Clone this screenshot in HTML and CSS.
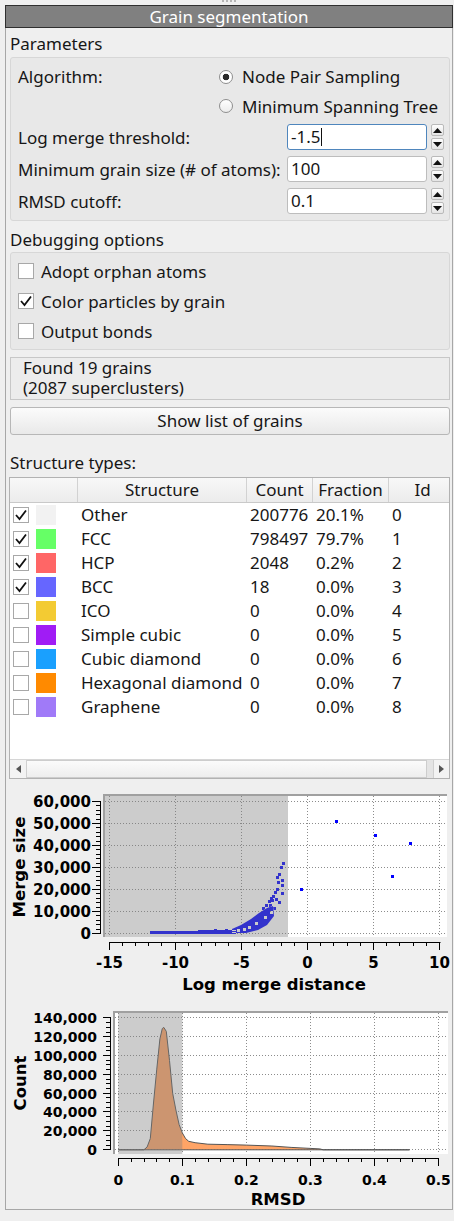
FILE: index.html
```html
<!DOCTYPE html>
<html>
<head>
<meta charset="utf-8">
<title>Grain segmentation</title>
<link rel="stylesheet" href="styles.css">
</head>
<body>
<div class="grip"><span></span></div>
<div class="panel">
  <div class="titlebar">Grain segmentation</div>
  <div class="content">
    <div class="sec sec-params">Parameters</div>
    <div class="group params">
      <div class="lbl g-r1">Algorithm:</div>
      <div class="radio g-r1b"><span class="rb on"></span>Node Pair Sampling</div>
      <div class="radio g-r2b"><span class="rb"></span>Minimum Spanning Tree</div>
      <div class="lbl wide g-r3">Log merge threshold:</div>
      <div class="field g-r3f">
        <div class="input focus">-1.5<span class="caret"></span></div>
        <div class="spin">
          <span class="sbtn"><svg width="9" height="5" viewBox="0 0 9 5"><path d="M0 5L4.5 0L9 5Z"/></svg></span>
          <span class="sbtn"><svg width="9" height="5" viewBox="0 0 9 5"><path d="M0 0L4.5 5L9 0Z"/></svg></span>
        </div>
      </div>
      <div class="lbl wide g-r4">Minimum grain size (# of atoms):</div>
      <div class="field g-r4f">
        <div class="input">100</div>
        <div class="spin">
          <span class="sbtn"><svg width="9" height="5" viewBox="0 0 9 5"><path d="M0 5L4.5 0L9 5Z"/></svg></span>
          <span class="sbtn"><svg width="9" height="5" viewBox="0 0 9 5"><path d="M0 0L4.5 5L9 0Z"/></svg></span>
        </div>
      </div>
      <div class="lbl wide g-r5">RMSD cutoff:</div>
      <div class="field g-r5f">
        <div class="input">0.1</div>
        <div class="spin">
          <span class="sbtn"><svg width="9" height="5" viewBox="0 0 9 5"><path d="M0 5L4.5 0L9 5Z"/></svg></span>
          <span class="sbtn"><svg width="9" height="5" viewBox="0 0 9 5"><path d="M0 0L4.5 5L9 0Z"/></svg></span>
        </div>
      </div>
    </div>

    <div class="sec sec-debug">Debugging options</div>
    <div class="group debug">
      <div class="crow"><span class="cb"></span>Adopt orphan atoms</div>
      <div class="crow"><span class="cb"><svg width="14" height="14" viewBox="0 0 14 14"><path d="M2 7L5.5 11L12 2.5" fill="none" stroke="#111" stroke-width="1.8"/></svg></span>Color particles by grain</div>
      <div class="crow"><span class="cb"></span>Output bonds</div>
    </div>

    <div class="status">Found 19 grains<br>(2087 superclusters)</div>
    <div class="btn">Show list of grains</div>

    <div class="sec sec-struct">Structure types:</div>
    <div class="table">
      <div class="thead">
        <div class="th"></div>
        <div class="th">Structure</div>
        <div class="th">Count</div>
        <div class="th">Fraction</div>
        <div class="th">Id</div>
      </div>
      <div class="tbody">
        <div class="tr">
          <div class="td c0"><span class="cb"><svg width="14" height="14" viewBox="0 0 14 14"><path d="M2 7L5.5 11L12 2.5" fill="none" stroke="#111" stroke-width="1.8"/></svg></span><span class="sw sw-other"></span></div>
          <div class="td">Other</div><div class="td">200776</div><div class="td">20.1%</div><div class="td">0</div>
        </div>
        <div class="tr">
          <div class="td c0"><span class="cb"><svg width="14" height="14" viewBox="0 0 14 14"><path d="M2 7L5.5 11L12 2.5" fill="none" stroke="#111" stroke-width="1.8"/></svg></span><span class="sw sw-fcc"></span></div>
          <div class="td">FCC</div><div class="td">798497</div><div class="td">79.7%</div><div class="td">1</div>
        </div>
        <div class="tr">
          <div class="td c0"><span class="cb"><svg width="14" height="14" viewBox="0 0 14 14"><path d="M2 7L5.5 11L12 2.5" fill="none" stroke="#111" stroke-width="1.8"/></svg></span><span class="sw sw-hcp"></span></div>
          <div class="td">HCP</div><div class="td">2048</div><div class="td">0.2%</div><div class="td">2</div>
        </div>
        <div class="tr">
          <div class="td c0"><span class="cb"><svg width="14" height="14" viewBox="0 0 14 14"><path d="M2 7L5.5 11L12 2.5" fill="none" stroke="#111" stroke-width="1.8"/></svg></span><span class="sw sw-bcc"></span></div>
          <div class="td">BCC</div><div class="td">18</div><div class="td">0.0%</div><div class="td">3</div>
        </div>
        <div class="tr">
          <div class="td c0"><span class="cb"></span><span class="sw sw-ico"></span></div>
          <div class="td">ICO</div><div class="td">0</div><div class="td">0.0%</div><div class="td">4</div>
        </div>
        <div class="tr">
          <div class="td c0"><span class="cb"></span><span class="sw sw-sc"></span></div>
          <div class="td">Simple cubic</div><div class="td">0</div><div class="td">0.0%</div><div class="td">5</div>
        </div>
        <div class="tr">
          <div class="td c0"><span class="cb"></span><span class="sw sw-cd"></span></div>
          <div class="td">Cubic diamond</div><div class="td">0</div><div class="td">0.0%</div><div class="td">6</div>
        </div>
        <div class="tr">
          <div class="td c0"><span class="cb"></span><span class="sw sw-hd"></span></div>
          <div class="td">Hexagonal diamond</div><div class="td">0</div><div class="td">0.0%</div><div class="td">7</div>
        </div>
        <div class="tr">
          <div class="td c0"><span class="cb"></span><span class="sw sw-gr"></span></div>
          <div class="td">Graphene</div><div class="td">0</div><div class="td">0.0%</div><div class="td">8</div>
        </div>
      </div>
      <div class="hscroll">
        <div class="sb-btn sb-left"><svg width="5" height="8" viewBox="0 0 5 8"><path d="M5 0L0 4L5 8Z"/></svg></div>
        <div class="sb-handle"></div>
        <div class="sb-gap"></div>
        <div class="sb-btn sb-right"><svg width="5" height="8" viewBox="0 0 5 8"><path d="M0 0L5 4L0 8Z"/></svg></div>
      </div>
    </div>

    <svg class="chart chart1" width="440" height="216" viewBox="10 784 440 216">
      <rect x="103" y="794" width="344" height="143" fill="#fff"/>
      <path class="grid" d="M109.5 796V937M175.5 796V937M241.5 796V937M307.5 796V937M373.5 796V937M439.5 796V937M105 801.5H447M105 823.5H447M105 845.5H447M105 867.5H447M105 889.5H447M105 911.5H447M105 933.5H447"/>
      <path fill="#0000ff" d="M150 931h86v3h-86zM198 930h38v2h-38zM232 933L246 933L258 930L267 925L274 916L273 906L267 908L259 913L251 919L241 925L232 929Z
        M262 907h3v3h-3zM265 904h3v3h-3zM268 900h3v3h-3zM270 897h3v3h-3zM271 899h3v3h-3zM269 904h3v3h-3zM273 907h3v3h-3zM272 895h3v3h-3zM274 891h3v3h-3zM276 888h3v3h-3zM276 876h3v3h-3zM278 873h3v3h-3zM280 866h3v3h-3zM282 862h3v3h-3zM281 879h3v3h-3zM277 881h3v3h-3zM281 884h3v3h-3zM281 892h3v3h-3zM278 901h3v3h-3zM275 898h3v3h-3zM270 911h3v3h-3zM264 916h3v3h-3zM255 922h3v3h-3zM248 926h3v3h-3zM243 928h3v3h-3zM237 929h3v3h-3zM225 929h3v3h-3zM214 929h3v3h-3z
        M300 888h3v3h-3zM335 820h3v3h-3zM374 834h3v3h-3zM391 875h3v3h-3zM409 842h3v3h-3z"/>
      <rect x="105" y="796" width="183" height="141" fill="#808080" fill-opacity="0.4"/>
      <rect x="103" y="794" width="344" height="2" fill="#a0a0a0"/>
      <rect x="103" y="794" width="2" height="143" fill="#a0a0a0"/>
      <path class="axis" d="M100.5 801V934M92 801.5H100M92 823.5H100M92 845.5H100M92 867.5H100M92 889.5H100M92 911.5H100M92 933.5H100
        M96 929.5H100M96 924.5H100M96 920.5H100M96 915.5H100M96 907.5H100M96 902.5H100M96 898.5H100M96 893.5H100M96 885.5H100M96 880.5H100M96 876.5H100M96 871.5H100M96 863.5H100M96 858.5H100M96 854.5H100M96 849.5H100M96 841.5H100M96 836.5H100M96 832.5H100M96 827.5H100M96 819.5H100M96 814.5H100M96 810.5H100M96 805.5H100
        M109 942.5H440.5M109.5 942V950M175.5 942V950M241.5 942V950M307.5 942V950M373.5 942V950M439.5 942V950
        M122.5 942V946M135.5 942V946M148.5 942V946M161.5 942V946M188.5 942V946M201.5 942V946M215.5 942V946M228.5 942V946M254.5 942V946M267.5 942V946M281.5 942V946M294.5 942V946M320.5 942V946M333.5 942V946M347.5 942V946M360.5 942V946M386.5 942V946M399.5 942V946M413.5 942V946M426.5 942V946"/>
      <g class="tk1">
        <text x="91" y="938.8">0</text>
        <text x="91" y="916.9">10,000</text>
        <text x="91" y="894.9">20,000</text>
        <text x="91" y="873">30,000</text>
        <text x="91" y="851.1">40,000</text>
        <text x="91" y="829.2">50,000</text>
        <text x="91" y="807.2">60,000</text>
      </g>
      <g class="tkx1">
        <text x="109.5" y="968">-15</text>
        <text x="175.5" y="968">-10</text>
        <text x="241.5" y="968">-5</text>
        <text x="307.5" y="968">0</text>
        <text x="373.5" y="968">5</text>
        <text x="439.5" y="968">10</text>
      </g>
      <text class="atitle" x="274" y="990">Log merge distance</text>
      <text class="atitle" transform="translate(25 867) rotate(-90)">Merge size</text>
    </svg>

    <svg class="chart chart2" width="440" height="209" viewBox="10 1000 440 209">
      <rect x="113" y="1011" width="335" height="143" fill="#fff"/>
      <path class="grid" d="M118.5 1013V1154M182.5 1013V1154M246.5 1013V1154M310.5 1013V1154M374.5 1013V1154M438.5 1013V1154M115 1017.5H448M115 1036.5H448M115 1055.5H448M115 1074.5H448M115 1093.5H448M115 1111.5H448M115 1130.5H448M115 1149.5H448"/>
      <path fill="#ffa466" stroke="#555" stroke-width="1" stroke-linejoin="round" d="M118.3 1149.8L143.9 1149.8L147.1 1147L150.3 1138.5L153.5 1103L156.7 1069.9L159.9 1038.9L162.3 1028.5L163.8 1027.4L166.3 1031.4L169.5 1060.5L172.7 1093.4L175.9 1110L179.1 1124.5L182.3 1132.9L185.5 1138.5L188.7 1141.3L195.1 1142.7L207.9 1144.2L227.1 1144.6L246.3 1145.1L271.9 1146L291.1 1147.4L310.3 1148.4L319.9 1148.9L323.1 1149.8L409.5 1149.8Z"/>
      <rect x="118.3" y="1013" width="64" height="141" fill="#808080" fill-opacity="0.4"/>
      <rect x="113" y="1011" width="335" height="2" fill="#a0a0a0"/>
      <rect x="113" y="1011" width="2" height="143" fill="#a0a0a0"/>
      <path class="axis" d="M110.5 1017V1150M103 1017.5H110M103 1036.5H110M103 1055.5H110M103 1074.5H110M103 1093.5H110M103 1111.5H110M103 1130.5H110M103 1149.5H110
        M106 1145.5H110M106 1140.5H110M106 1135.5H110M106 1126.5H110M106 1121.5H110M106 1116.5H110M106 1107.5H110M106 1102.5H110M106 1097.5H110M106 1088.5H110M106 1083.5H110M106 1079.5H110M106 1069.5H110M106 1064.5H110M106 1060.5H110M106 1050.5H110M106 1046.5H110M106 1041.5H110M106 1032.5H110M106 1027.5H110M106 1022.5H110
        M118 1158.5H439M118.5 1158V1166M182.5 1158V1166M246.5 1158V1166M310.5 1158V1166M374.5 1158V1166M438.5 1158V1166
        M131.5 1158V1162M144.5 1158V1162M156.5 1158V1162M169.5 1158V1162M195.5 1158V1162M208.5 1158V1162M220.5 1158V1162M233.5 1158V1162M259.5 1158V1162M272.5 1158V1162M284.5 1158V1162M297.5 1158V1162M323.5 1158V1162M336.5 1158V1162M348.5 1158V1162M361.5 1158V1162M387.5 1158V1162M400.5 1158V1162M412.5 1158V1162M425.5 1158V1162"/>
      <g class="tk2">
        <text x="97" y="1154.9">0</text>
        <text x="97" y="1136.1">20,000</text>
        <text x="97" y="1117.3">40,000</text>
        <text x="97" y="1098.5">60,000</text>
        <text x="97" y="1079.7">80,000</text>
        <text x="97" y="1060.9">100,000</text>
        <text x="97" y="1042.1">120,000</text>
        <text x="97" y="1023.3">140,000</text>
      </g>
      <g class="tkx2">
        <text x="118.3" y="1185">0</text>
        <text x="182.3" y="1185">0.1</text>
        <text x="246.3" y="1185">0.2</text>
        <text x="310.3" y="1185">0.3</text>
        <text x="374.3" y="1185">0.4</text>
        <text x="438.3" y="1185">0.5</text>
      </g>
      <text class="atitle" x="278" y="1205">RMSD</text>
      <text class="atitle" transform="translate(26 1083) rotate(-90)">Count</text>
    </svg>
  </div>
</div>
</body>
</html>
```

FILE: styles.css
```css
html, body {
  margin: 0;
  padding: 0;
}
body {
  background: #efefef;
  font-family: "Noto Sans", "Open Sans", sans-serif;
  font-size: 17px;
  color: #161616;
  width: 454px;
  height: 1221px;
  overflow: hidden;
}

.grip {
  height: 5px;
  display: flex;
  justify-content: center;
}
.grip span {
  width: 14px;
  height: 0;
  margin-left: 4px;
  border-top: 2px dotted #b5b5b5;
}

.panel {
  margin-left: 5px;
  width: 448px;
  box-sizing: border-box;
  border: 1px solid #a7a7a7;
  border-top: none;
}

.titlebar {
  margin: 0 -1px;
  height: 23px;
  box-sizing: border-box;
  background: #808080;
  border: 1px solid #2f2f2f;
  color: #fff;
  text-align: center;
  line-height: 21px;
  font-size: 17px;
}

.content {
  padding: 0 2px 0 4px;
}

.sec {
  line-height: 20px;
}
.sec-params {
  padding-top: 6px;
  margin-bottom: 3px;
}
.sec-debug {
  padding-top: 9px;
  margin-bottom: 2px;
}
.sec-struct {
  padding-top: 18px;
  margin-bottom: 4px;
}

.group {
  background: #e8e8e8;
  border: 1px solid #d7d7d7;
  border-radius: 3px;
  box-sizing: border-box;
}

.params {
  height: 164px;
  padding: 7px 5px 6px 7px;
  display: grid;
  grid-template-columns: 201px 68px 1fr;
  grid-template-rows: 23px 24px 26px 26px 26px;
  row-gap: 6px;
}
.lbl {
  display: flex;
  align-items: center;
  white-space: nowrap;
}
.g-r1 { grid-column: 1; grid-row: 1; }
.g-r1b { grid-column: 2 / 4; grid-row: 1; }
.g-r2b { grid-column: 2 / 4; grid-row: 2; }
.g-r3 { grid-column: 1 / 3; grid-row: 3; }
.g-r3f { grid-column: 3; grid-row: 3; }
.g-r4 { grid-column: 1 / 3; grid-row: 4; }
.g-r4f { grid-column: 3; grid-row: 4; }
.g-r5 { grid-column: 1 / 3; grid-row: 5; }
.g-r5f { grid-column: 3; grid-row: 5; }

.radio {
  display: flex;
  align-items: center;
  white-space: nowrap;
}
.rb {
  width: 14px;
  height: 14px;
  box-sizing: border-box;
  border-radius: 50%;
  border: 1px solid #8e8e8e;
  background: linear-gradient(#ffffff, #ececec);
  margin-right: 9px;
  flex: none;
}
.rb.on {
  background: radial-gradient(circle, #2a2a2a 0 3px, #ffffff 3.6px);
}

.field {
  display: flex;
  gap: 4px;
}
.input {
  width: 140px;
  height: 26px;
  box-sizing: border-box;
  background: #fff;
  border: 1px solid #bdbdbd;
  border-radius: 3px;
  padding-left: 3px;
  line-height: 24px;
  display: flex;
  align-items: center;
}
.input.focus {
  border-color: #4f86bd;
}
.caret {
  display: inline-block;
  width: 1px;
  height: 18px;
  background: #111;
  margin-left: 1px;
}
.spin {
  width: 13px;
  display: flex;
  flex-direction: column;
  gap: 2px;
}
.sbtn {
  height: 12px;
  box-sizing: border-box;
  border: 1px solid #bababa;
  border-radius: 2px;
  background: linear-gradient(#fdfdfd, #e4e4e4);
  display: flex;
  align-items: center;
  justify-content: center;
}
.sbtn svg {
  fill: #111;
}

.debug {
  height: 98px;
  padding: 5px 0 5px 7px;
  display: flex;
  flex-direction: column;
  gap: 4px;
}
.crow {
  height: 26px;
  display: flex;
  align-items: center;
}
.crow .cb {
  margin-right: 7px;
}
.cb {
  width: 16px;
  height: 16px;
  box-sizing: border-box;
  border: 1px solid #a8a8a8;
  background: #fff;
  display: inline-flex;
  align-items: center;
  justify-content: center;
  flex: none;
}

.status {
  margin-top: 7px;
  height: 43px;
  box-sizing: border-box;
  border: 1px solid #c7c7c7;
  background: #ececec;
  padding-left: 12px;
  line-height: 20px;
}

.btn {
  margin-top: 7px;
  height: 28px;
  box-sizing: border-box;
  border: 1px solid #b7b7b7;
  border-radius: 3px;
  background: linear-gradient(#fbfbfb, #e9e9e9);
  text-align: center;
  line-height: 26px;
}

.table {
  margin-left: -1px;
  width: 441px;
  height: 302px;
  box-sizing: border-box;
  border: 1px solid #b2b2b2;
  background: #fff;
  overflow: hidden;
  display: flex;
  flex-direction: column;
}
.thead, .tr {
  display: grid;
  grid-template-columns: 68px 169px 66px 76px 68px;
  width: 447px;
}
.thead {
  height: 25px;
  box-sizing: border-box;
  border-bottom: 1px solid #c9c9c9;
  background: linear-gradient(#f8f8f8, #ececec);
}
.th {
  border-right: 1px solid #d2d2d2;
  text-align: center;
  line-height: 24px;
  white-space: nowrap;
}
.tbody {
  height: 256px;
}
.tr {
  height: 24px;
}
.td {
  line-height: 24px;
  padding-left: 3px;
  white-space: nowrap;
  overflow: hidden;
}
.td.c0 {
  display: flex;
  align-items: center;
  gap: 7px;
}
.sw {
  width: 20px;
  height: 20px;
  flex: none;
}
.sw-other { background: #f2f2f2; }
.sw-fcc { background: #66ff66; }
.sw-hcp { background: #ff6666; }
.sw-bcc { background: #6666ff; }
.sw-ico { background: #f3cb33; }
.sw-sc { background: #a01cf5; }
.sw-cd { background: #1aa0fe; }
.sw-hd { background: #ff8a00; }
.sw-gr { background: #a07af8; }

.hscroll {
  height: 19px;
  box-sizing: border-box;
  border-top: 1px solid #d6d6d6;
  background: #e4e4e4;
  display: flex;
}
.sb-btn {
  background: #f3f3f3;
  display: flex;
  align-items: center;
  justify-content: center;
}
.sb-btn svg {
  fill: #555;
}
.sb-left {
  width: 17px;
  box-sizing: border-box;
  border-right: 1px solid #d0d0d0;
}
.sb-right {
  width: 16px;
  box-sizing: border-box;
  border-left: 1px solid #d0d0d0;
}
.sb-handle {
  width: 400px;
  box-sizing: border-box;
  border: 1px solid #cdcdcd;
  border-left: none;
  background: linear-gradient(#fbfbfb, #eeeeee);
}
.sb-gap {
  flex: 1;
}

.chart {
  display: block;
}
.chart1 {
  margin-top: 5px;
}
.grid {
  fill: none;
  stroke: #8c8c8c;
  stroke-width: 1;
  stroke-dasharray: 1 2;
}
.axis {
  fill: none;
  stroke: #000;
  stroke-width: 1;
}
.tk1 text {
  font-family: "DejaVu Sans", sans-serif;
  font-weight: bold;
  font-size: 15px;
  text-anchor: end;
  fill: #000;
}
.tkx1 text {
  font-family: "DejaVu Sans", sans-serif;
  font-weight: bold;
  font-size: 15px;
  text-anchor: middle;
  fill: #000;
}
.tk2 text {
  font-family: "DejaVu Sans", sans-serif;
  font-weight: bold;
  font-size: 14px;
  text-anchor: end;
  fill: #000;
}
.tkx2 text {
  font-family: "DejaVu Sans", sans-serif;
  font-weight: bold;
  font-size: 14px;
  text-anchor: middle;
  fill: #000;
}
.atitle {
  font-family: "DejaVu Sans", sans-serif;
  font-weight: bold;
  font-size: 16.5px;
  text-anchor: middle;
  fill: #000;
}
```
